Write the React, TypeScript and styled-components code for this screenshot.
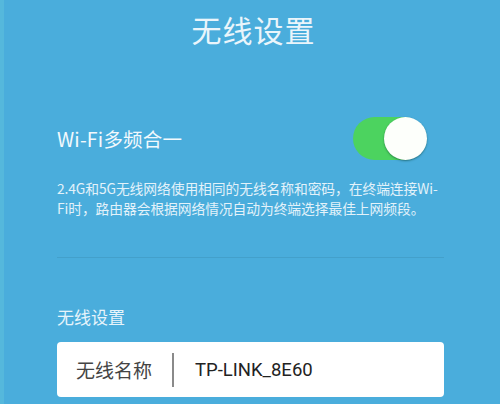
import React from "react";
import styled, { createGlobalStyle } from "styled-components";

const Global = createGlobalStyle`
  html, body { margin: 0; padding: 0; }
  body {
    width: 500px;
    height: 404px;
    overflow: hidden;
    background: #4aaddc;
    font-family: "Noto Sans CJK SC", "Noto Sans", sans-serif;
  }
`;

const Page = styled.div`
  width: 500px;
  height: 404px;
  box-sizing: border-box;
  background: #4aaddc;
  border-left: 4px solid #55b8dc;
  display: flex;
  flex-direction: column;
  padding: 0 56px 0 53px;
  overflow: hidden;
`;

const Title = styled.h1`
  margin: 7px 0 0;
  text-align: center;
  font-size: 30px;
  font-weight: 400;
  line-height: 44px;
  color: #eaf5fb;
  letter-spacing: 1px;
  padding-left: 6px;
`;

const ToggleRow = styled.div`
  margin-top: 66px;
  display: flex;
  align-items: center;
  justify-content: space-between;
  padding-right: 19px;
`;

const ToggleLabel = styled.span`
  font-size: 19.5px;
  color: #f2f9fd;
  line-height: 26px;
  letter-spacing: 0.2px;
`;

const Track = styled.div<{ $on: boolean }>`
  width: 72px;
  height: 43px;
  border-radius: 22px;
  background: ${(p) => (p.$on ? "#4cd35f" : "#cccccc")};
  position: relative;
  filter: blur(0.6px);
`;

const Knob = styled.div`
  position: absolute;
  top: 0;
  right: -2px;
  width: 43px;
  height: 43px;
  border-radius: 50%;
  background: #fdfffb;
  box-shadow: 0 1px 2px rgba(0, 60, 40, 0.5);
`;

const Desc = styled.p`
  margin: 18px 0 0;
  font-size: 13.8px;
  line-height: 20px;
  color: #e3f2fa;
  letter-spacing: -0.1px;
  white-space: nowrap;
`;

const Divider = styled.hr`
  margin: 39px 0 0;
  border: none;
  height: 1px;
  background: #43a0cb;
`;

const SectionLabel = styled.div`
  margin-top: 48px;
  font-size: 17px;
  line-height: 22px;
  color: #e6f4fb;
`;

const Field = styled.div`
  margin-top: 14px;
  height: 55px;
  flex-shrink: 0;
  background: #ffffff;
  border-radius: 4px;
  display: flex;
  align-items: center;
  padding-left: 19px;
`;

const FieldLabel = styled.span`
  font-size: 19px;
  color: #444444;
  width: 96px;
`;

const FieldSep = styled.span`
  width: 2px;
  height: 34px;
  background: #8a8a8a;
  margin-right: 21px;
`;

const FieldValue = styled.span`
  font-family: "Roboto", "Noto Sans", sans-serif;
  font-size: 18.5px;
  color: #222222;
`;

export default function App() {
  return (
    <>
      <Global />
      <Page>
        <Title>无线设置</Title>
        <ToggleRow>
          <ToggleLabel>Wi-Fi多频合一</ToggleLabel>
          <Track $on>
            <Knob />
          </Track>
        </ToggleRow>
        <Desc>
          2.4G和5G无线网络使用相同的无线名称和密码，在终端连接Wi-
          <br />
          Fi时，路由器会根据网络情况自动为终端选择最佳上网频段。
        </Desc>
        <Divider />
        <SectionLabel>无线设置</SectionLabel>
        <Field>
          <FieldLabel>无线名称</FieldLabel>
          <FieldSep />
          <FieldValue>TP-LINK_8E60</FieldValue>
        </Field>
      </Page>
    </>
  );
}
